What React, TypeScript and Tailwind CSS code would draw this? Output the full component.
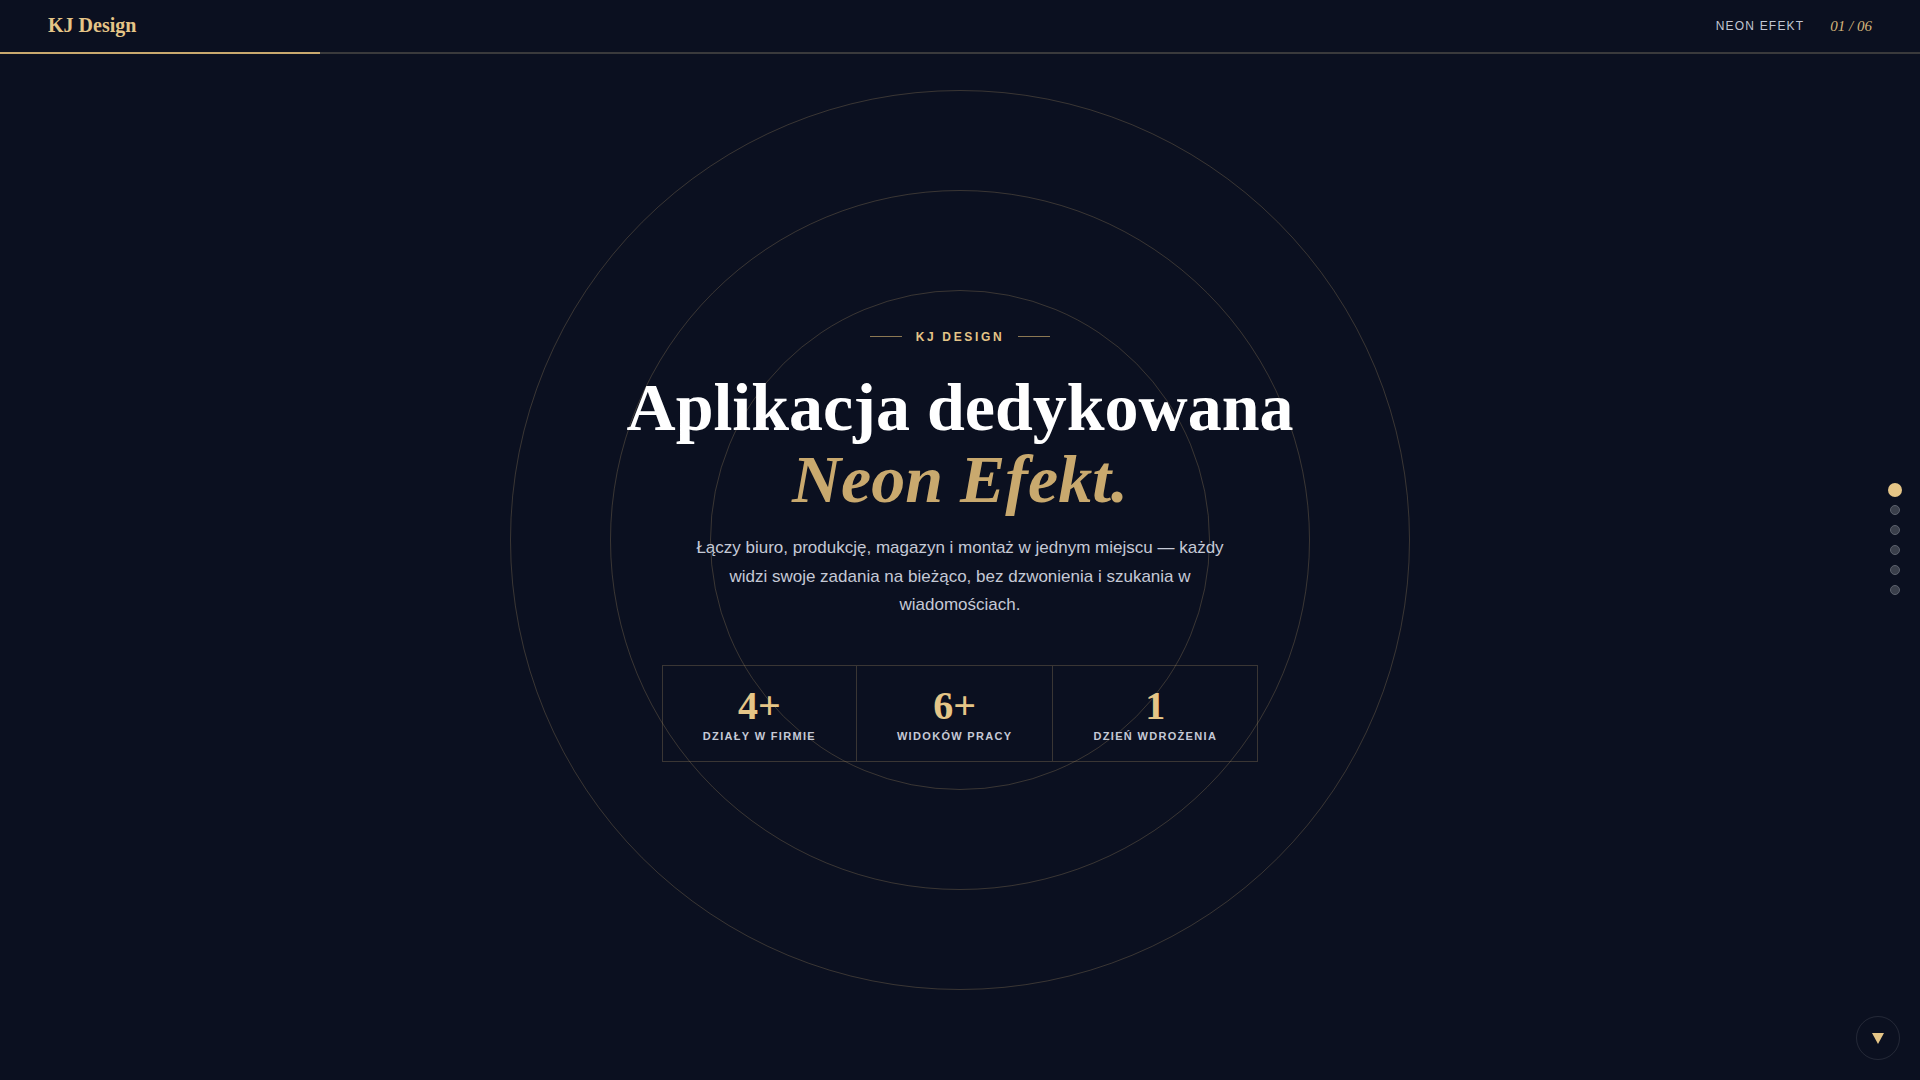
const serif = "font-['Liberation_Serif','Times_New_Roman',serif]"
const sans = "font-['Liberation_Sans',Arial,sans-serif]"

const stats = [
  { value: '4+', label: 'Działy w firmie' },
  { value: '6+', label: 'Widoków pracy' },
  { value: '1', label: 'Dzień wdrożenia' },
]

export default function App() {
  return (
    <div className={`relative flex h-[1080px] w-full flex-col overflow-hidden bg-[#0b1020] ${sans}`}>
      {/* rings behind the hero */}
      <div className="pointer-events-none absolute left-1/2 top-1/2 h-[900px] w-[900px] -translate-x-1/2 -translate-y-1/2 rounded-full border border-[#c9a96e]/25" />
      <div className="pointer-events-none absolute left-1/2 top-1/2 h-[700px] w-[700px] -translate-x-1/2 -translate-y-1/2 rounded-full border border-[#c9a96e]/25" />
      <div className="pointer-events-none absolute left-1/2 top-1/2 h-[500px] w-[500px] -translate-x-1/2 -translate-y-1/2 rounded-full border border-[#c9a96e]/25" />

      <header className="relative z-10">
        <div className="flex h-[52px] items-center justify-between px-12">
          <span className={`${serif} -mt-[2px] text-[20px] font-bold leading-none text-[#e5c587]`}>KJ Design</span>
          <div className="flex items-center gap-[26px]">
            <span className="text-[12px] uppercase leading-none tracking-[0.1em] text-[#c2c6d2]">Neon Efekt</span>
            <span className={`${serif} text-[15px] italic leading-none text-[#d4b57a]`}>01 / 06</span>
          </div>
        </div>
        <div className="flex h-[2px] w-full bg-[#3a3a3c]">
          <div className="h-full w-[320px] bg-[#c9a96e]" />
        </div>
      </header>

      <main className="relative z-10 flex flex-1 items-center justify-center pb-[43px]">
        <div className="flex flex-col items-center text-center">
          <div className="flex items-center gap-[14px]">
            <span className="h-px w-8 bg-[#8c7853]" />
            <span className="text-[12px] font-bold uppercase leading-4 tracking-[0.22em] text-[#e5c587]">KJ Design</span>
            <span className="h-px w-8 bg-[#8c7853]" />
          </div>

          <h1 className={`${serif} mt-[26px] text-[68px] font-bold leading-[72px] text-white`}>
            Aplikacja dedykowana
            <br />
            <em className="italic text-[#c9a96e]">Neon Efekt.</em>
          </h1>

          <p className="mt-[19px] max-w-[540px] text-[17px] leading-[1.7] text-[#c5c9d6]">
            Łączy biuro, produkcję, magazyn i montaż w jednym miejscu — każdy widzi swoje zadania na bieżąco, bez
            dzwonienia i szukania w wiadomościach.
          </p>

          <div className="mt-[45px] flex border border-[#c9a96e]/25">
            {stats.map((s, i) => (
              <div
                key={s.label}
                className={`flex flex-col items-center px-10 pb-[17px] pt-5 ${i > 0 ? 'border-l border-[#c9a96e]/25' : ''}`}
              >
                <span className={`${serif} text-[40px] font-bold leading-none text-[#e5c587]`}>{s.value}</span>
                <span className="mt-[2px] text-[11px] font-bold uppercase leading-4 tracking-[0.12em] text-[#c5c9d6]">
                  {s.label}
                </span>
              </div>
            ))}
          </div>
        </div>
      </main>

      {/* slide dots */}
      <nav className="absolute right-[15px] top-1/2 z-10 flex -translate-y-1/2 flex-col">
        {[0, 1, 2, 3, 4, 5].map((i) => (
          <div key={i} className="flex h-5 w-5 items-center justify-center">
            {i === 0 ? (
              <span className="h-[14px] w-[14px] rounded-full bg-[#e5c587]" />
            ) : (
              <span className="h-[10px] w-[10px] rounded-full border border-[#5c616d] bg-[#3a3f4b]" />
            )}
          </div>
        ))}
      </nav>

      <button className="absolute bottom-5 right-5 z-10 flex h-11 w-11 items-center justify-center rounded-full border border-white/10">
        <svg width="12" height="12" viewBox="0 0 12 12">
          <polygon points="0,1 12,1 6,12" fill="#e5c587" />
        </svg>
      </button>
    </div>
  )
}
